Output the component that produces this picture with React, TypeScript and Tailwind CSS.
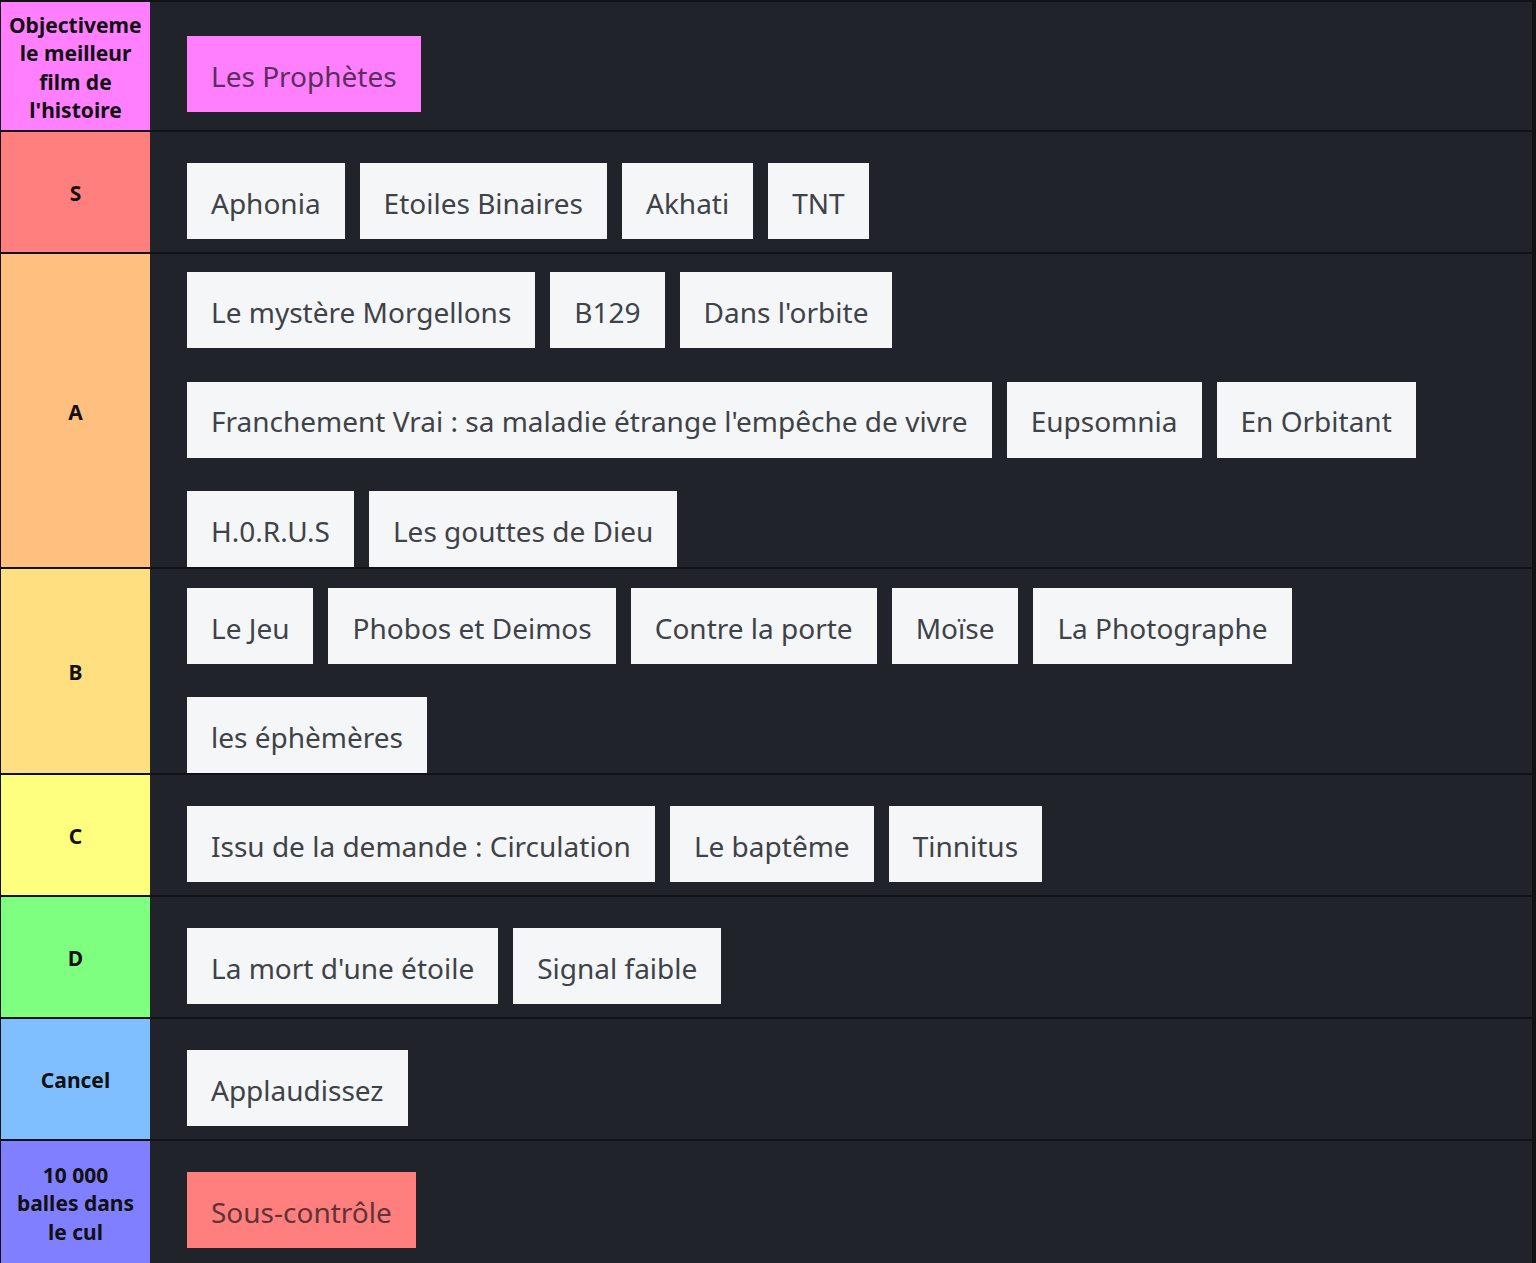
import React from "react";

type Tier = {
  label: string[];
  color: string;
  items: { text: string; cls?: string }[];
  pad: string;
};

const tiers: Tier[] = [
  {
    label: ["Objectivement", "le meilleur", "film de", "l'histoire"],
    color: "bg-[#ff7fff]",
    items: [{ text: "Les Prophètes", cls: "bg-[#ff7fff] text-[#5a2f5e]" }],
    pad: "h-[128px] pt-[34px]",
  },
  {
    label: ["S"],
    color: "bg-[#ff7f7f]",
    items: [{ text: "Aphonia" }, { text: "Etoiles Binaires" }, { text: "Akhati" }, { text: "TNT" }],
    pad: "h-[120px] pt-[31px]",
  },
  {
    label: ["A"],
    color: "bg-[#ffbf7f]",
    items: [
      { text: "Le mystère Morgellons" },
      { text: "B129" },
      { text: "Dans l'orbite" },
      { text: "Franchement Vrai : sa maladie étrange l'empêche de vivre" },
      { text: "Eupsomnia" },
      { text: "En Orbitant" },
      { text: "H.0.R.U.S" },
      { text: "Les gouttes de Dieu" },
    ],
    pad: "h-[313px] pt-[18px] gap-y-[33.5px]",
  },
  {
    label: ["B"],
    color: "bg-[#ffdf7f]",
    items: [
      { text: "Le Jeu" },
      { text: "Phobos et Deimos" },
      { text: "Contre la porte" },
      { text: "Moïse" },
      { text: "La Photographe" },
      { text: "les éphèmères" },
    ],
    pad: "h-[204px] pt-[19px] gap-y-[33px]",
  },
  {
    label: ["C"],
    color: "bg-[#ffff7f]",
    items: [{ text: "Issu de la demande : Circulation" }, { text: "Le baptême" }, { text: "Tinnitus" }],
    pad: "h-[120px] pt-[31px]",
  },
  {
    label: ["D"],
    color: "bg-[#7fff7f]",
    items: [{ text: "La mort d'une étoile" }, { text: "Signal faible" }],
    pad: "h-[120px] pt-[31px]",
  },
  {
    label: ["Cancel"],
    color: "bg-[#7fbfff]",
    items: [{ text: "Applaudissez" }],
    pad: "h-[120px] pt-[31px]",
  },
  {
    label: ["10 000", "balles dans", "le cul"],
    color: "bg-[#7f7fff]",
    items: [{ text: "Sous-contrôle", cls: "bg-[#ff7f7f] text-[#5e3434]" }],
    pad: "h-[122px] pt-[31px]",
  },
];

export default function App() {
  return (
    <div
      className="w-[1536px] h-[1263px] overflow-hidden bg-[#111216] pt-[2px] flex flex-col gap-[2px]"
      style={{ fontFamily: '"Noto Sans", "Open Sans", sans-serif' }}
    >
      {tiers.map((t, i) => (
        <div key={i} className="flex shrink-0">
          <div
            className={`w-[150px] shrink-0 ${t.color} border-l border-[#111216] flex items-center justify-center px-[8px] pt-[3px]`}
          >
            <div className="w-full overflow-hidden text-center text-[21px] leading-[28.5px] font-bold text-[#111111] whitespace-nowrap">
              {t.label.map((l, j) => (
                <div key={j}>{l}</div>
              ))}
            </div>
          </div>
          <div
            className={`flex-1 bg-[#20232a] mr-[4px] flex flex-wrap content-start items-start gap-x-[15px] pl-[37px] pr-[20px] ${t.pad}`}
          >
            {t.items.map((it, k) => (
              <div
                key={k}
                className={`h-[76px] px-[24px] pt-[3px] flex items-center text-[28px] whitespace-nowrap ${
                  it.cls ?? "bg-[#f5f6f7] text-[#3e4249]"
                }`}
              >
                {it.text}
              </div>
            ))}
          </div>
        </div>
      ))}
    </div>
  );
}
